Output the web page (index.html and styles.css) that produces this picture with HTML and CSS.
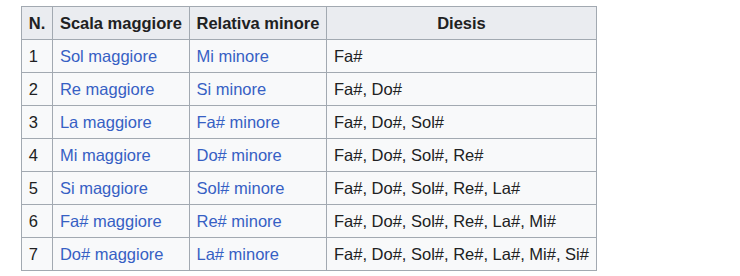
FILE: index.html
```html
<!DOCTYPE html>
<html lang="it">
<head>
<meta charset="utf-8">
<link rel="stylesheet" href="styles.css">
</head>
<body>
<table class="wikitable">
<tr><th>N.</th><th>Scala maggiore</th><th>Relativa minore</th><th>Diesis</th></tr>
<tr><td>1</td><td><a href="#">Sol maggiore</a></td><td><a href="#">Mi minore</a></td><td>Fa#</td></tr>
<tr><td>2</td><td><a href="#">Re maggiore</a></td><td><a href="#">Si minore</a></td><td>Fa#, Do#</td></tr>
<tr><td>3</td><td><a href="#">La maggiore</a></td><td><a href="#">Fa# minore</a></td><td>Fa#, Do#, Sol#</td></tr>
<tr><td>4</td><td><a href="#">Mi maggiore</a></td><td><a href="#">Do# minore</a></td><td>Fa#, Do#, Sol#, Re#</td></tr>
<tr><td>5</td><td><a href="#">Si maggiore</a></td><td><a href="#">Sol# minore</a></td><td>Fa#, Do#, Sol#, Re#, La#</td></tr>
<tr><td>6</td><td><a href="#">Fa# maggiore</a></td><td><a href="#">Re# minore</a></td><td>Fa#, Do#, Sol#, Re#, La#, Mi#</td></tr>
<tr><td>7</td><td><a href="#">Do# maggiore</a></td><td><a href="#">La# minore</a></td><td>Fa#, Do#, Sol#, Re#, La#, Mi#, Si#</td></tr>
</table>
</body>
</html>
```
FILE: styles.css
```css
html, body { margin: 0; padding: 0; background: #fff; }
body { padding: 6px 0 0 21px; font-family: "Liberation Sans", Arial, sans-serif; font-size: 16.5px; line-height: 25.6px; color: #202122; }
.wikitable { border-collapse: collapse; border: 1px solid #a2a9b1; background: #f8f9fa; color: #202122; }
.wikitable th, .wikitable td { border: 1px solid #a2a9b1; padding: 4px 6.8px 2.4px; text-align: left; font-weight: normal; }
.wikitable th { background: #eaecf0; font-weight: bold; text-align: center; }
.wikitable a { color: #3660c4; text-decoration: none; }
```
